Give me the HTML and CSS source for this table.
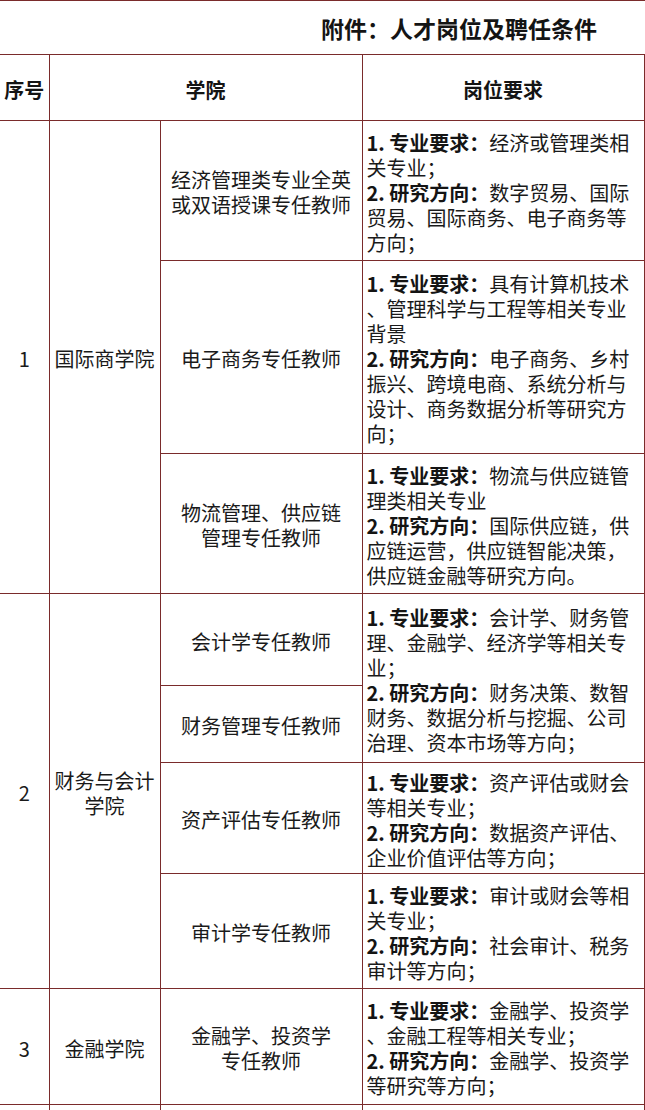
FILE: index.html
```html
<!DOCTYPE html>
<html lang="zh-CN">
<head>
<meta charset="utf-8">
<title>附件：人才岗位及聘任条件</title>
<link rel="stylesheet" href="styles.css">
</head>
<body>
<div class="sheet">
  <div class="title">附件：人才岗位及聘任条件</div>
  <table class="grid">
    <colgroup>
      <col class="c-seq">
      <col class="c-college">
      <col class="c-post">
      <col class="c-req">
    </colgroup>
    <thead>
      <tr class="h-head">
        <th class="seq">序号</th>
        <th colspan="2">学院</th>
        <th>岗位要求</th>
      </tr>
    </thead>
    <tbody>
      <tr class="h-140">
        <td class="seq" rowspan="3">1</td>
        <td class="college" rowspan="3">国际商学院</td>
        <td class="post">经济管理类专业全英或双语授课专任教师</td>
        <td class="req"><p><b>1. 专业要求：</b>经济或管理类相关专业；</p><p><b>2. 研究方向：</b>数字贸易、国际贸易、国际商务、电子商务等方向；</p></td>
      </tr>
      <tr class="h-193">
        <td class="post">电子商务专任教师</td>
        <td class="req"><p><b>1. 专业要求：</b>具有计算机技术、管理科学与工程等相关专业背景</p><p><b>2. 研究方向：</b>电子商务、乡村振兴、跨境电商、系统分析与设计、商务数据分析等研究方向；</p></td>
      </tr>
      <tr class="h-140">
        <td class="post">物流管理、供应链<br>管理专任教师</td>
        <td class="req"><p><b>1. 专业要求：</b>物流与供应链管理类相关专业</p><p><b>2. 研究方向：</b>国际供应链，供应链运营，供应链智能决策，供应链金融等研究方向。</p></td>
      </tr>
      <tr class="h-92">
        <td class="seq" rowspan="4">2</td>
        <td class="college" rowspan="4">财务与会计学院</td>
        <td class="post">会计学专任教师</td>
        <td class="req" rowspan="2"><p><b>1. 专业要求：</b>会计学、财务管理、金融学、经济学等相关专业；</p><p><b>2. 研究方向：</b>财务决策、数智财务、数据分析与挖掘、公司治理、资本市场等方向；</p></td>
      </tr>
      <tr class="h-77">
        <td class="post">财务管理专任教师</td>
      </tr>
      <tr class="h-111">
        <td class="post">资产评估专任教师</td>
        <td class="req"><p><b>1. 专业要求：</b>资产评估或财会等相关专业；</p><p><b>2. 研究方向：</b>数据资产评估、企业价值评估等方向；</p></td>
      </tr>
      <tr class="h-115">
        <td class="post">审计学专任教师</td>
        <td class="req"><p><b>1. 专业要求：</b>审计或财会等相关专业；</p><p><b>2. 研究方向：</b>社会审计、税务审计等方向；</p></td>
      </tr>
      <tr class="h-116">
        <td class="seq">3</td>
        <td class="college">金融学院</td>
        <td class="post">金融学、投资学<br>专任教师</td>
        <td class="req"><p><b>1. 专业要求：</b>金融学、投资学、金融工程等相关专业；</p><p><b>2. 研究方向：</b>金融学、投资学等研究等方向；</p></td>
      </tr>
      <tr class="h-116">
        <td class="seq"></td>
        <td class="college"></td>
        <td class="post"></td>
        <td class="req"></td>
      </tr>
    </tbody>
  </table>
</div>
</body>
</html>
```

FILE: styles.css
```css
html, body {
  margin: 0;
  padding: 0;
  background: #ffffff;
}

body {
  font-family: "Noto Sans CJK SC", "Noto Sans", sans-serif;
  color: #1a1a1a;
  font-size: 20px;
  line-height: 25px;
}

.sheet {
  width: 645px;
  overflow: hidden;
}

.title {
  height: 54px;
  box-sizing: border-box;
  border-top: 1px solid #7a2b2b;
  padding-right: 48px;
  text-align: right;
  font-size: 23px;
  font-weight: 700;
  line-height: 54px;
  color: #141414;
}

.grid {
  width: 644px;
  table-layout: fixed;
  border-collapse: collapse;
}

.c-seq { width: 49px; }
.c-college { width: 111px; }
.c-post { width: 202px; }
.c-req { width: 282px; }

.grid th,
.grid td {
  border: 1px solid #7a2b2b;
  padding: 3px 4px 0 4px;
  vertical-align: middle;
  text-align: center;
  font-weight: 400;
}

.grid th {
  font-weight: 700;
  color: #141414;
}

.grid .seq {
  border-left: none;
  padding-left: 0;
  padding-right: 0;
}

.grid .college {
  padding-left: 3px;
  padding-right: 3px;
}

.grid .post {
  padding-left: 5px;
  padding-right: 5px;
}

.grid .req {
  text-align: left;
  padding-left: 4px;
  padding-right: 6px;
  line-break: anywhere;
}

.req p {
  margin: 0;
}

.req b {
  font-weight: 700;
  color: #141414;
}

.h-head { height: 66px; }
.h-140 { height: 140px; }
.h-193 { height: 193px; }
.h-92 { height: 92px; }
.h-77 { height: 77px; }
.h-111 { height: 111px; }
.h-115 { height: 115px; }
.h-116 { height: 116px; }
```
